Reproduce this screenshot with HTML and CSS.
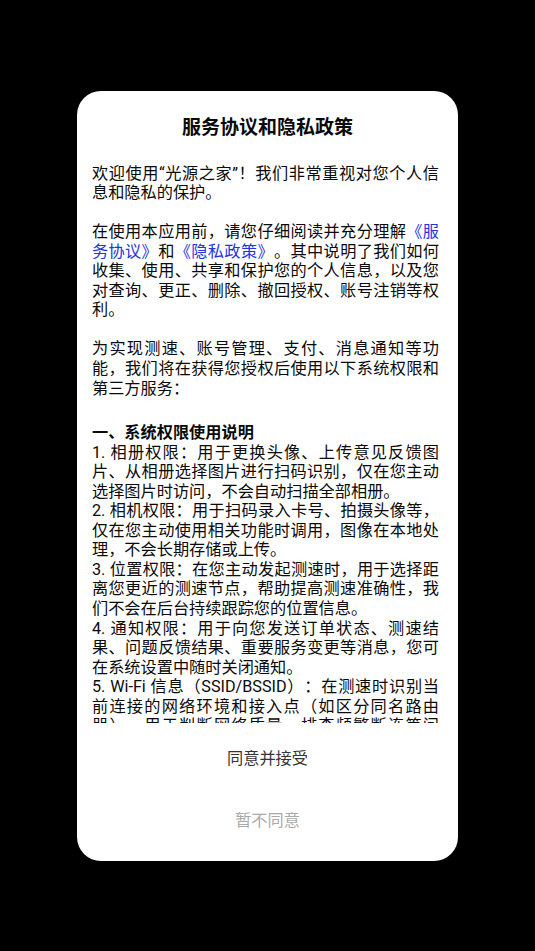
FILE: index.html
```html
<!DOCTYPE html>
<html lang="zh-CN">
<head>
<meta charset="utf-8">
<meta name="viewport" content="width=device-width, initial-scale=1">
<title>服务协议和隐私政策</title>
<link rel="stylesheet" href="styles.css">
</head>
<body>
<div class="dialog">
  <h1 class="title">服务协议和隐私政策</h1>
  <div class="content">
    <p>欢迎使用“光源之家”！我们非常重视对您个人信息和隐私的保护。</p>
    <p>在使用本应用前，请您仔细阅读并充分理解<a class="link" href="#">《服务协议》</a>和<a class="link" href="#">《隐私政策》</a>。其中说明了我们如何收集、使用、共享和保护您的个人信息，以及您对查询、更正、删除、撤回授权、账号注销等权利。</p>
    <p>为实现测速、账号管理、支付、消息通知等功能，我们将在获得您授权后使用以下系统权限和第三方服务：</p>
    <div class="section-title">一、系统权限使用说明</div>
    <div class="item">1. 相册权限：用于更换头像、上传意见反馈图片、从相册选择图片进行扫码识别，仅在您主动选择图片时访问，不会自动扫描全部相册。</div>
    <div class="item">2. 相机权限：用于扫码录入卡号、拍摄头像等，仅在您主动使用相关功能时调用，图像在本地处理，不会长期存储或上传。</div>
    <div class="item">3. 位置权限：在您主动发起测速时，用于选择距离您更近的测速节点，帮助提高测速准确性，我们不会在后台持续跟踪您的位置信息。</div>
    <div class="item">4. 通知权限：用于向您发送订单状态、测速结果、问题反馈结果、重要服务变更等消息，您可在系统设置中随时关闭通知。</div>
    <div class="item">5. Wi-Fi 信息（SSID/BSSID）：在测速时识别当前连接的网络环境和接入点（如区分同名路由器），用于判断网络质量、排查频繁断连等问题，不会用于其他目的。</div>
  </div>
  <div class="actions">
    <button class="btn btn-primary" type="button">同意并接受</button>
    <button class="btn btn-secondary" type="button">暂不同意</button>
  </div>
</div>
</body>
</html>
```
FILE: styles.css
```css
html, body {
  margin: 0;
  padding: 0;
}

body {
  background: #000;
  height: 951px;
  display: flex;
  align-items: center;
  justify-content: center;
  font-family: Roboto, "Noto Sans CJK SC", sans-serif;
  color: #0a0a0a;
}

.dialog {
  width: 381px;
  height: 770px;
  background: #fff;
  border-radius: 24px;
  display: flex;
  flex-direction: column;
  overflow: hidden;
}

.title {
  margin: 0;
  padding-top: 24px;
  font-size: 19px;
  line-height: 26px;
  font-weight: 700;
  text-align: center;
  color: #0a0a0a;
}

.content {
  flex: 1;
  min-height: 0;
  overflow: hidden;
  margin-top: 23px;
  padding: 0 19px 0 15px;
  font-size: 16.2px;
  line-height: 19.55px;
  text-align: justify;
  text-spacing-trim: space-all;
}

.content p {
  margin: 0 0 19.55px;
}

.link {
  color: #2433dc;
  text-decoration: none;
}

.section-title {
  margin-top: 25px;
  font-weight: 700;
}

.item {
  margin: 0;
}

.actions {
  display: flex;
  flex-direction: column;
  gap: 14px;
  padding: 10px 0 18px;
}

.btn {
  height: 48px;
  border: 0;
  background: none;
  padding: 0;
  font-family: inherit;
  font-size: 16.2px;
  cursor: pointer;
}

.btn-primary {
  color: #333;
}

.btn-secondary {
  color: #aaa;
}
```
